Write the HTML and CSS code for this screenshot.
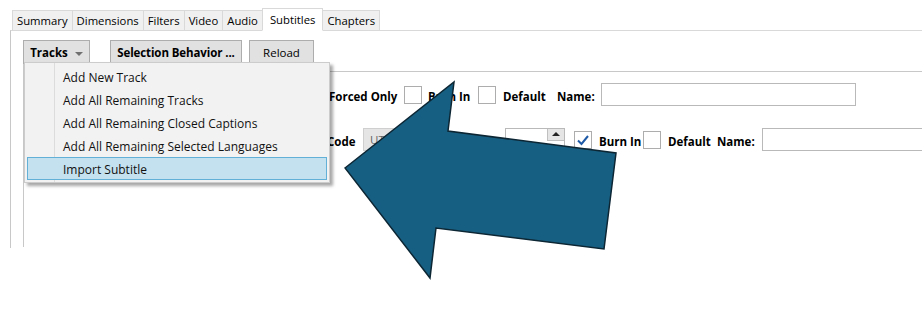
FILE: index.html
```html
<!DOCTYPE html>
<html lang="en">
<head>
    <meta charset="UTF-8">
    <meta name="viewport" content="width=device-width, initial-scale=1.0">
    <link rel="stylesheet" href="styles.css">
    <title>Subtitles</title>
</head>
<body>
    <div class="window">
        <div class="tabs">
            <div class="tab">Summary</div>
            <div class="tab">Dimensions</div>
            <div class="tab">Filters</div>
            <div class="tab">Video</div>
            <div class="tab">Audio</div>
            <div class="tab active">Subtitles</div>
            <div class="tab">Chapters</div>
        </div>

        <div class="panel">
            <div class="toolbar">
                <button class="btn btn-tracks">Tracks <span class="caret"></span></button>
                <button class="btn btn-sel">Selection Behavior ...</button>
                <button class="btn btn-reload">Reload</button>
            </div>

            <div class="tracks">
                <div class="track-list">
                    <div class="track-row row-one">
                        <span class="lbl w-forced">Forced Only</span>
                        <span class="cb"></span>
                        <span class="lbl w-burn">Burn In</span>
                        <span class="cb"></span>
                        <span class="lbl w-default">Default</span>
                        <span class="lbl w-name">Name:</span>
                        <span class="textbox w-text1"></span>
                    </div>
                    <div class="track-row row-two">
                        <span class="lbl w-code">Code</span>
                        <span class="combo">UTF-8</span>
                        <span class="spinner"><span class="spin-up"></span></span>
                        <span class="cb checked">
                            <svg width="16" height="16" viewBox="0 0 16 16"><path d="M3 8.5 L6.5 12 L13 4" fill="none" stroke="#1e5aa6" stroke-width="2"/></svg>
                        </span>
                        <span class="lbl w-burn2">Burn In</span>
                        <span class="cb"></span>
                        <span class="lbl w-default2">Default</span>
                        <span class="lbl w-name2">Name:</span>
                        <span class="textbox w-text2"></span>
                    </div>
                </div>
            </div>
        </div>

        <!-- dropdown of the Tracks button -->
        <div class="menu">
            <div class="menu-item">Add New Track</div>
            <div class="menu-item">Add All Remaining Tracks</div>
            <div class="menu-item">Add All Remaining Closed Captions</div>
            <div class="menu-item">Add All Remaining Selected Languages</div>
            <div class="menu-item hover">Import Subtitle</div>
        </div>

        <svg class="arrow" width="922" height="325" viewBox="0 0 922 325">
            <polygon points="345,168 454,82 448,131 616,153 604,249 436,228 430,278" fill="#175f82" stroke="#0c2634" stroke-width="1.5" stroke-linejoin="miter"/>
        </svg>
    </div>
</body>
</html>
```

FILE: styles.css
```css
body {
    margin: 0;
    background: #fff;
    font-family: 'Open Sans', 'Noto Sans', sans-serif;
    font-size: 11.5px;
    color: #000;
}

.window {
    position: relative;
    width: 922px;
    height: 325px;
    overflow: hidden;
    background: #fff;
}

/* tab strip */
.tabs {
    display: flex;
    align-items: flex-end;
    height: 31px;
    padding-left: 12px;
    box-sizing: border-box;
    position: relative;
    z-index: 1;
}

.tab {
    height: 21px;
    line-height: 20px;
    padding: 0 4px;
    font-size: 11.3px;
    background: #f0f0f0;
    border: 1px solid #d9d9d9;
    border-left: none;
    box-sizing: border-box;
}

.tab:first-child {
    border-left: 1px solid #d9d9d9;
}

.tab.active {
    height: 23px;
    line-height: 21px;
    padding: 0 7px;
    background: #fff;
    border-bottom-color: #fff;
    margin-left: -1px;
    border-left: 1px solid #d9d9d9;
}

.panel {
    margin-top: -1px;
    margin-left: 10px;
    height: 217px;
    border-top: 1px solid #d9d9d9;
    border-left: 1px solid #c8c8c8;
}

.toolbar {
    display: flex;
    padding: 9px 0 0 12px;
    height: 24px;
}

.btn {
    height: 24px;
    padding: 1px 0 0;
    background: #e1e1e1;
    border: 1px solid #adadad;
    font-family: inherit;
    font-size: 11.5px;
    color: #000;
    box-sizing: border-box;
}

.btn-tracks {
    width: 67px;
    font-weight: bold;
    margin-right: 20px;
}

.btn-sel {
    width: 132px;
    font-weight: bold;
    letter-spacing: -0.1px;
    margin-right: 7px;
}

.btn-reload {
    width: 65px;
}

.caret {
    display: inline-block;
    margin-left: 4px;
    vertical-align: middle;
    border-left: 4px solid transparent;
    border-right: 4px solid transparent;
    border-top: 4px solid #707070;
}

.tracks {
    margin-left: 12px;
    height: 183px;
    border-left: 1px solid #c8c8c8;
    padding-top: 7px;
    box-sizing: border-box;
}

.track-list {
    border-top: 1px solid #c8c8c8;
}

.track-row {
    display: flex;
    align-items: center;
    height: 45px;
    font-weight: bold;
    white-space: nowrap;
}

.row-one {
    padding-left: 305px;
}

.row-two {
    padding-left: 303px;
}

.lbl {
    flex: none;
    padding-top: 4px;
}

.w-forced { width: 75px; }
.w-burn { width: 50px; margin-left: 6px; }
.w-default { width: 54px; margin-left: 7px; }
.w-name { width: 44px; }
.w-code { width: 36px; }
.w-burn2 { width: 44px; margin-left: 7px; }
.w-default2 { width: 49px; margin-left: 7px; }
.w-name2 { width: 45px; }

.cb {
    flex: none;
    width: 18px;
    height: 18px;
    border: 1px solid #adadad;
    background: #fff;
    box-sizing: border-box;
    display: flex;
    align-items: center;
    justify-content: center;
}

.cb.checked {
    margin-left: 9px;
}

.textbox {
    flex: none;
    height: 23px;
    border: 1px solid #b9b9b9;
    background: #fff;
    box-sizing: border-box;
}

.w-text1 { width: 255px; }
.w-text2 { width: 200px; }

.combo {
    flex: none;
    width: 80px;
    height: 23px;
    line-height: 21px;
    padding-left: 6px;
    margin-right: 62px;
    background: #e5e5e5;
    border: 1px solid #cfcfcf;
    box-sizing: border-box;
    font-weight: normal;
    color: #666;
}

.spinner {
    flex: none;
    position: relative;
    width: 60px;
    height: 23px;
    border: 1px solid #b9b9b9;
    box-sizing: border-box;
}

.spin-up {
    position: absolute;
    right: 0;
    top: 0;
    width: 17px;
    height: 12px;
    background: #e5e5e5;
    border-left: 1px solid #c0c0c0;
    border-bottom: 1px solid #c0c0c0;
    box-sizing: border-box;
}

.spin-up::after {
    content: "";
    position: absolute;
    left: 4px;
    top: 3px;
    border-left: 4px solid transparent;
    border-right: 4px solid transparent;
    border-bottom: 4px solid #222;
}

/* popup menu */
.menu {
    position: absolute;
    left: 24px;
    top: 62px;
    width: 306px;
    padding: 2px;
    background: #f2f2f2;
    border: 1px solid #cccccc;
    box-sizing: border-box;
    box-shadow: 3px 3px 3px rgba(0, 0, 0, 0.35);
    z-index: 2;
}

.menu::before {
    content: "";
    position: absolute;
    left: 29px;
    top: 0;
    bottom: 0;
    border-left: 1px solid #dcdcdc;
}

.menu-item {
    position: relative;
    height: 23px;
    line-height: 22px;
    padding: 1px 0 0 35px;
    font-size: 12px;
    color: #111;
    box-sizing: border-box;
    border: 1px solid transparent;
}

.menu-item.hover {
    background: #c4e1ef;
    border-color: #62afd8;
}

.arrow {
    position: absolute;
    left: 0;
    top: 0;
    z-index: 3;
    pointer-events: none;
}
```
